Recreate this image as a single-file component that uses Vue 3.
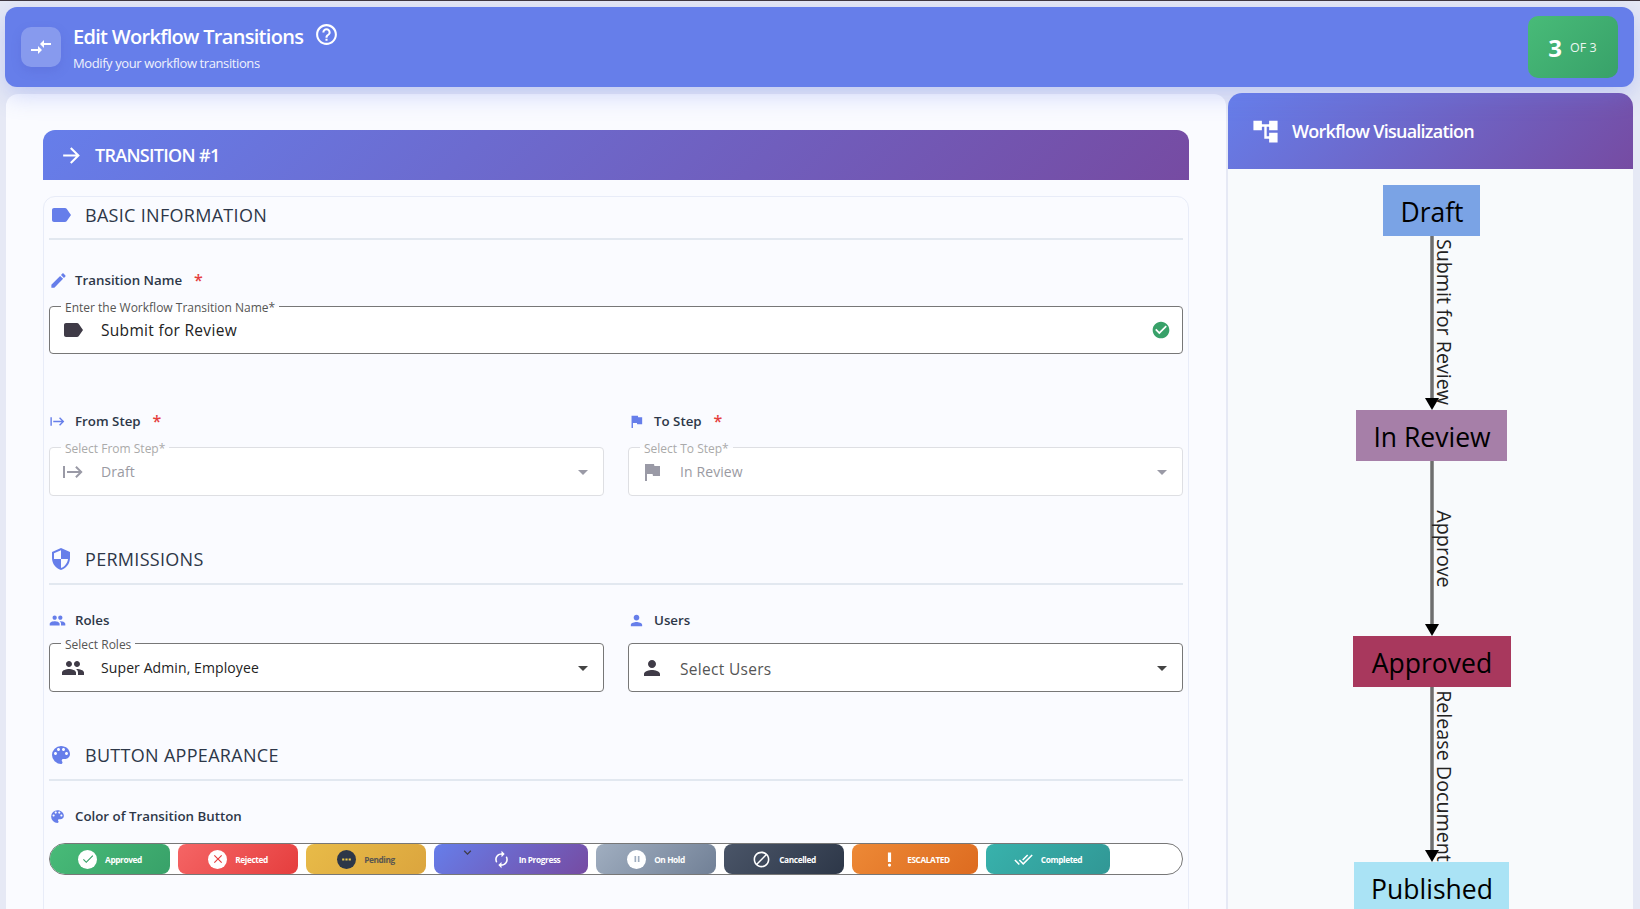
<template>
  <div class="page">
    <header class="top-bar">
      <div class="top-icon">
        <svg viewBox="0 0 24 24"><path :d="icons.compare" /></svg>
      </div>
      <div class="top-text">
        <div class="top-title">
          <span>Edit Workflow Transitions</span>
          <svg class="help" viewBox="0 0 24 24"><path :d="icons.help" /></svg>
        </div>
        <div class="top-sub">Modify your workflow transitions</div>
      </div>
      <div class="step-badge">
        <span class="step-num">3</span>
        <span class="step-of">OF 3</span>
      </div>
    </header>

    <main class="content">
      <section class="form-panel">
        <div class="transition-head">
          <svg viewBox="0 0 24 24"><path :d="icons.arrow" /></svg>
          <span>TRANSITION #1</span>
        </div>

        <div class="form-card">
          <div class="section-title first">
            <svg viewBox="0 0 24 24"><path :d="icons.label" /></svg>
            <span>BASIC INFORMATION</span>
          </div>

          <div class="field-label name-label">
            <svg viewBox="0 0 24 24"><path :d="icons.edit" /></svg>
            <span>Transition Name</span>
            <i class="req">*</i>
          </div>
          <div class="outlined name-input">
            <span class="legend">Enter the Workflow Transition Name*</span>
            <svg class="lead" viewBox="0 0 24 24"><path :d="icons.label" /></svg>
            <span class="value big">Submit for Review</span>
            <svg class="ok" viewBox="0 0 24 24"><path :d="icons.checkCircle" /></svg>
          </div>

          <div class="two-col step-labels">
            <div class="field-label">
              <svg viewBox="0 0 24 24"><path :d="icons.start" /></svg>
              <span>From Step</span>
              <i class="req">*</i>
            </div>
            <div class="field-label">
              <svg viewBox="0 0 24 24"><path :d="icons.flag" /></svg>
              <span>To Step</span>
              <i class="req">*</i>
            </div>
          </div>
          <div class="two-col step-fields">
            <div class="outlined disabled">
              <span class="legend">Select From Step*</span>
              <svg class="lead" viewBox="0 0 24 24"><path :d="icons.start" /></svg>
              <span class="value">Draft</span>
              <svg class="drop" viewBox="0 0 24 24"><path :d="icons.drop" /></svg>
            </div>
            <div class="outlined disabled">
              <span class="legend">Select To Step*</span>
              <svg class="lead" viewBox="0 0 24 24"><path :d="icons.flag" /></svg>
              <span class="value">In Review</span>
              <svg class="drop" viewBox="0 0 24 24"><path :d="icons.drop" /></svg>
            </div>
          </div>

          <div class="section-title">
            <svg viewBox="0 0 24 24"><path :d="icons.shield" /></svg>
            <span>PERMISSIONS</span>
          </div>

          <div class="two-col perm-labels">
            <div class="field-label">
              <svg viewBox="0 0 24 24"><path :d="icons.people" /></svg>
              <span>Roles</span>
            </div>
            <div class="field-label">
              <svg viewBox="0 0 24 24"><path :d="icons.person" /></svg>
              <span>Users</span>
            </div>
          </div>
          <div class="two-col perm-fields">
            <div class="outlined">
              <span class="legend">Select Roles</span>
              <svg class="lead" viewBox="0 0 24 24"><path :d="icons.people" /></svg>
              <span class="value">Super Admin, Employee</span>
              <svg class="drop" viewBox="0 0 24 24"><path :d="icons.drop" /></svg>
            </div>
            <div class="outlined">
              <svg class="lead" viewBox="0 0 24 24"><path :d="icons.person" /></svg>
              <span class="value big muted">Select Users</span>
              <svg class="drop" viewBox="0 0 24 24"><path :d="icons.drop" /></svg>
            </div>
          </div>

          <div class="section-title">
            <svg viewBox="0 0 24 24"><path :d="icons.palette" /></svg>
            <span>BUTTON APPEARANCE</span>
          </div>

          <div class="field-label color-label">
            <svg viewBox="0 0 24 24"><path :d="icons.palette" /></svg>
            <span>Color of Transition Button</span>
          </div>
          <div class="toggle-group">
            <button v-for="b in buttons" :key="b.text" class="toggle" :class="b.cls">
              <svg v-if="b.cls === 'progress'" class="chevron" viewBox="0 0 24 24"><path :d="icons.chevron" /></svg>
              <span class="toggle-icon" :class="{ badge: b.badge }">
                <svg viewBox="0 0 24 24"><path :d="icons[b.icon]" /></svg>
              </span>
              <span>{{ b.text }}</span>
            </button>
          </div>
        </div>
      </section>

      <aside class="viz-panel">
        <div class="viz-head">
          <svg viewBox="0 0 24 24"><path :d="icons.tree" /></svg>
          <span>Workflow Visualization</span>
        </div>
        <svg class="diagram" width="405" height="740" viewBox="0 0 405 740">
          <g v-for="e in edges" :key="e.label">
            <line x1="204" :y1="e.y1" x2="204" :y2="e.y2 - 10" stroke="#6e6e6e" stroke-width="3.5" />
            <polygon :points="`197,${e.y2 - 12} 211,${e.y2 - 12} 204,${e.y2}`" fill="#000" />
            <text class="edge-text" text-anchor="middle" :transform="`translate(209 ${e.mid}) rotate(90)`">{{ e.label }}</text>
          </g>
          <g v-for="n in nodes" :key="n.label">
            <rect :x="n.x" :y="n.y" :width="n.w" :height="n.h" :fill="n.fill" />
            <text class="node-text" x="204" :y="n.y + 37" text-anchor="middle">{{ n.label }}</text>
          </g>
        </svg>
      </aside>
    </main>
  </div>
</template>

<script setup>
// Material icon paths used across the form
const icons = {
  compare: 'M9.01 14H2v2h7.01v3L13 15l-3.99-4v3zm5.98-1v-3H22V8h-7.01V5L11 9l3.99 4z',
  help: 'M11 18h2v-2h-2v2zm1-16C6.48 2 2 6.48 2 12s4.48 10 10 10 10-4.48 10-10S17.52 2 12 2zm0 18c-4.41 0-8-3.59-8-8s3.59-8 8-8 8 3.59 8 8-3.59 8-8 8zm0-14c-2.21 0-4 1.79-4 4h2c0-1.1.9-2 2-2s2 .9 2 2c0 2-3 1.75-3 5h2c0-2.25 3-2.5 3-5 0-2.21-1.79-4-4-4z',
  arrow: 'M12 4l-1.41 1.41L16.17 11H4v2h12.17l-5.58 5.59L12 20l8-8z',
  label: 'M17.63 5.84C17.27 5.33 16.67 5 16 5L5 5.01C3.9 5.01 3 5.9 3 7v10c0 1.1.9 1.99 2 1.99L16 19c.67 0 1.27-.33 1.63-.84L22 12l-4.37-6.16z',
  edit: 'M3 17.25V21h3.75L17.81 9.94l-3.75-3.75L3 17.25zM20.71 7.04c.39-.39.39-1.02 0-1.41l-2.34-2.34c-.39-.39-1.02-.39-1.41 0l-1.83 1.83 3.75 3.75 1.83-1.83z',
  checkCircle: 'M12 2C6.48 2 2 6.48 2 12s4.48 10 10 10 10-4.48 10-10S17.52 2 12 2zm-2 15l-5-5 1.41-1.41L10 14.17l7.59-7.59L19 8l-9 9z',
  start: 'M2 6v12h2V6H2zm13.6 0-1.4 1.4 3.6 3.6H6v2h11.8l-3.6 3.6 1.4 1.4 6-6z',
  flag: 'M14.4 6L14 4H5v17h2v-7h5.6l.4 2h7V6z',
  shield: 'M12 1L3 5v6c0 5.55 3.84 10.74 9 12 5.16-1.26 9-6.45 9-12V5l-9-4zm0 10.99h7c-.53 4.12-3.28 7.79-7 8.94V12H5V6.3l7-3.11v8.8z',
  people: 'M16 11c1.66 0 2.99-1.34 2.99-3S17.66 5 16 5c-1.66 0-3 1.34-3 3s1.34 3 3 3zm-8 0c1.66 0 2.99-1.34 2.99-3S9.66 5 8 5C6.34 5 5 6.34 5 8s1.34 3 3 3zm0 2c-2.33 0-7 1.17-7 3.5V19h14v-2.5c0-2.33-4.67-3.5-7-3.5zm8 0c-.29 0-.62.02-.97.05 1.16.84 1.97 1.97 1.97 3.45V19h6v-2.5c0-2.33-4.67-3.5-7-3.5z',
  person: 'M12 12c2.21 0 4-1.79 4-4s-1.79-4-4-4-4 1.79-4 4 1.79 4 4 4zm0 2c-2.67 0-8 1.34-8 4v2h16v-2c0-2.66-5.33-4-8-4z',
  palette: 'M12 3a9 9 0 0 0 0 18c.83 0 1.5-.67 1.5-1.5 0-.39-.15-.74-.39-1.01-.23-.26-.38-.61-.38-.99 0-.83.67-1.5 1.5-1.5H16c2.76 0 5-2.24 5-5 0-4.42-4.03-8-9-8zm-5.5 9c-.83 0-1.5-.67-1.5-1.5S5.67 9 6.5 9 8 9.67 8 10.5 7.33 12 6.5 12zm3-4C8.67 8 8 7.33 8 6.5S8.67 5 9.5 5s1.5.67 1.5 1.5S10.33 8 9.5 8zm5 0c-.83 0-1.5-.67-1.5-1.5S13.67 5 14.5 5s1.5.67 1.5 1.5S15.33 8 14.5 8zm3 4c-.83 0-1.5-.67-1.5-1.5S16.67 9 17.5 9s1.5.67 1.5 1.5-.67 1.5-1.5 1.5z',
  tree: 'M22 11V3h-7v3H9V3H2v8h7V8h2v10h4v3h7v-8h-7v3h-2V8h2v3z',
  drop: 'M7 10l5 5 5-5z',
  chevron: 'M16.59 8.59L12 13.17 7.41 8.59 6 10l6 6 6-6z',
  renew: 'M12 6v3l4-4-4-4v3c-4.42 0-8 3.58-8 8 0 1.57.46 3.03 1.24 4.26L6.7 14.8c-.45-.83-.7-1.79-.7-2.8 0-3.31 2.69-6 6-6zm6.76 1.74L17.3 9.2c.44.84.7 1.79.7 2.8 0 3.31-2.69 6-6 6v-3l-4 4 4 4v-3c4.42 0 8-3.58 8-8 0-1.57-.46-3.03-1.24-4.26z',
  check: 'M9 16.17L4.83 12l-1.42 1.41L9 19 21 7l-1.41-1.41z',
  close: 'M19 6.41L17.59 5 12 10.59 6.41 5 5 6.41 10.59 12 5 17.59 6.41 19 12 13.41 17.59 19 19 17.59 13.41 12z',
  more: 'M4 10h4v4H4zm6 0h4v4h-4zm6 0h4v4h-4z',
  pause: 'M6 19h4V5H6v14zm8-14v14h4V5h-4z',
  block: 'M12 2C6.48 2 2 6.48 2 12s4.48 10 10 10 10-4.48 10-10S17.52 2 12 2zM4 12c0-4.42 3.58-8 8-8 1.85 0 3.55.63 4.9 1.69L5.69 16.9C4.63 15.55 4 13.85 4 12zm8 8c-1.85 0-3.55-.63-4.9-1.69L18.31 7.1C19.37 8.45 20 10.15 20 12c0 4.42-3.58 8-8 8z',
  priority: 'M10 3h4v12h-4zM12 17a2 2 0 1 1 0 4 2 2 0 0 1 0-4z',
  doneAll: 'M18 7l-1.41-1.41-6.34 6.34 1.41 1.41L18 7zm4.24-1.41L11.66 16.17 7.48 12l-1.41 1.41L11.66 19l12-12-1.42-1.41zM.41 13.41L6 19l1.41-1.41L1.83 12 .41 13.41z'
}

const buttons = [
  { text: 'Approved', cls: 'approved', icon: 'check', badge: true },
  { text: 'Rejected', cls: 'rejected', icon: 'close', badge: true },
  { text: 'Pending', cls: 'pending', icon: 'more', badge: true },
  { text: 'In Progress', cls: 'progress', icon: 'renew' },
  { text: 'On Hold', cls: 'hold', icon: 'pause', badge: true },
  { text: 'Cancelled', cls: 'cancelled', icon: 'block' },
  { text: 'ESCALATED', cls: 'escalated', icon: 'priority' },
  { text: 'Completed', cls: 'completed', icon: 'doneAll' }
]

// Workflow graph, coordinates are inside the svg
const nodes = [
  { label: 'Draft', x: 155, y: 16, w: 97, h: 51, fill: '#7aa3e5' },
  { label: 'In Review', x: 128, y: 241, w: 151, h: 51, fill: '#a67fa8' },
  { label: 'Approved', x: 125, y: 467, w: 158, h: 51, fill: '#a8385d' },
  { label: 'Published', x: 126, y: 693, w: 155, h: 60, fill: '#aae3f5' }
]

const edges = [
  { label: 'Submit for Review', y1: 66, y2: 241, mid: 153 },
  { label: 'Approve', y1: 292, y2: 467, mid: 380 },
  { label: 'Release Document', y1: 518, y2: 693, mid: 607 }
]
</script>

<style>
html, body {
  margin: 0;
  background: #e6e9f5;
}
</style>

<style scoped>
.page {
  height: 909px;
  overflow: hidden;
  box-sizing: border-box;
  border-top: 1px solid #3e3640;
  padding: 6px 6px 0 5px;
  display: flex;
  flex-direction: column;
  background: #e6e9f5;
  font-family: "Open Sans", "Noto Sans", sans-serif;
  color: #2d3748;
}

.top-bar {
  flex: none;
  height: 80px;
  box-sizing: border-box;
  display: flex;
  align-items: center;
  padding: 0 16px 0 16px;
  border-radius: 12px;
  background: #667eea;
  color: #fff;
  box-shadow: 0 8px 24px rgba(102, 126, 234, 0.3);
  position: relative;
  z-index: 2;
}

.top-icon {
  width: 40px;
  height: 40px;
  border-radius: 10px;
  background: rgba(255, 255, 255, 0.22);
  display: flex;
  align-items: center;
  justify-content: center;
  box-shadow: 0 4px 10px rgba(80, 90, 200, 0.25);
}

.top-icon svg {
  width: 24px;
  height: 24px;
  fill: #fff;
}

.top-text {
  margin-left: 12px;
  flex: 1;
}

.top-title {
  display: flex;
  align-items: center;
  font-size: 20px;
  font-weight: 600;
  line-height: 28px;
  letter-spacing: -0.7px;
}

.help {
  width: 25px;
  height: 25px;
  margin: -4px 0 0 11px;
  fill: #fff;
}

.top-sub {
  font-size: 13px;
  line-height: 18px;
  margin-top: 3px;
  letter-spacing: -0.4px;
  opacity: 0.9;
}

.step-badge {
  width: 90px;
  height: 62px;
  border-radius: 10px;
  background: linear-gradient(135deg, #48bb78, #38a169);
  display: flex;
  align-items: center;
  justify-content: center;
  gap: 8px;
}

.step-num {
  font-size: 24px;
  font-weight: 700;
  margin-left: -1px;
}

.step-of {
  font-size: 12.5px;
  opacity: 0.9;
}

.content {
  flex: 1;
  min-height: 0;
  display: flex;
  gap: 2px;
  margin-top: 7px;
  margin-left: 1px;
}

.form-panel {
  width: 1220px;
  flex: none;
  box-sizing: border-box;
  padding: 36px 37px 0;
  background: #fafbff;
  border-radius: 12px 12px 0 0;
}

.transition-head {
  height: 50px;
  display: flex;
  align-items: center;
  padding-left: 16px;
  gap: 11px;
  border-radius: 12px 12px 0 0;
  background: linear-gradient(135deg, #667eea, #764ba2);
  color: #fff;
  font-size: 18px;
  font-weight: 600;
  letter-spacing: -0.7px;
}

.transition-head svg {
  width: 25px;
  height: 25px;
  fill: #fff;
}

.form-card {
  margin-top: 16px;
  box-sizing: border-box;
  height: 760px;
  padding: 0 5px;
  border: 1px solid #e8ecf8;
  border-radius: 12px;
}

.section-title {
  height: 43px;
  box-sizing: border-box;
  display: flex;
  align-items: center;
  gap: 12px;
  margin-top: 46px;
  padding-bottom: 7px;
  border-bottom: 2px solid #e2e8f0;
  font-size: 18px;
  font-weight: 500;
  letter-spacing: 0.3px;
  color: #2d3748;
}

.section-title.first {
  margin-top: 0;
  padding-bottom: 5px;
}

.section-title svg {
  width: 24px;
  height: 24px;
  fill: #667eea;
  flex: none;
}

.field-label {
  height: 20px;
  display: flex;
  align-items: center;
  gap: 9px;
  font-size: 13.3px;
  font-weight: 600;
  color: #2d3748;
}

.field-label svg {
  width: 17px;
  height: 17px;
  fill: #667eea;
  flex: none;
}

.name-label svg {
  width: 19px;
  height: 19px;
  margin-right: -2px;
}

.req {
  margin-left: 3px;
  margin-top: -1px;
  font-style: normal;
  font-size: 16px;
  color: #e53e3e;
}

.name-label {
  margin-top: 30px;
}

.two-col {
  display: grid;
  grid-template-columns: 1fr 1fr;
  gap: 24px;
}

.outlined {
  position: relative;
  box-sizing: border-box;
  display: flex;
  align-items: center;
  padding: 0 8px 0 14px;
  border: 1px solid #777;
  border-radius: 4px;
  background: #fff;
  height: 49px;
  font-size: 14px;
  color: #222;
}

.legend {
  position: absolute;
  top: -6px;
  left: 11px;
  padding: 0 4px;
  font-size: 12px;
  line-height: 14px;
  color: #555;
  background: linear-gradient(#fafbff 45%, #fff 45%);
}

.lead {
  width: 24px;
  height: 24px;
  margin-left: -3px;
  fill: #3f3b47;
  flex: none;
}

.value {
  margin-left: 16px;
  flex: 1;
  letter-spacing: 0.1px;
}

.value.big {
  font-size: 15.5px;
  letter-spacing: 0.3px;
}

.value.muted {
  color: #555;
  padding-top: 2px;
}

.ok {
  width: 20px;
  height: 20px;
  margin-right: 3px;
  fill: #38a169;
}

.drop {
  width: 24px;
  height: 24px;
  fill: #444;
}

.name-input {
  margin-top: 16px;
  height: 48px;
}

.step-labels {
  margin-top: 57px;
}

.step-fields {
  margin-top: 16px;
}

.step-fields .outlined {
  height: 49px;
  border-color: #dedfe3;
  color: #9a9aa2;
}

.disabled .legend {
  color: #aaa;
}

.disabled .lead,
.disabled .drop {
  fill: #9a9aa6;
}

.perm-labels {
  margin-top: 25px;
}

.perm-fields {
  margin-top: 13px;
}

.color-label {
  margin-top: 25px;
}

.toggle-group {
  margin-top: 17px;
  height: 32px;
  box-sizing: border-box;
  border: 1px solid #777;
  border-radius: 16px;
  background: #fff;
  overflow: hidden;
  display: flex;
  gap: 8px;
}

.toggle {
  position: relative;
  width: 120px;
  height: 30px;
  flex: none;
  padding: 0;
  border: none;
  border-radius: 8px;
  display: flex;
  align-items: center;
  justify-content: center;
  gap: 8px;
  font-family: inherit;
  font-size: 8.3px;
  font-weight: 700;
  letter-spacing: -0.4px;
  color: #fff;
}

.toggle-icon {
  width: 19px;
  height: 19px;
  display: flex;
  align-items: center;
  justify-content: center;
  flex: none;
}

.toggle-icon svg {
  width: 19px;
  height: 19px;
  fill: #fff;
}

.toggle-icon.badge {
  border-radius: 50%;
  background: #fff;
}

.toggle-icon.badge svg {
  width: 14px;
  height: 14px;
}

.chevron {
  position: absolute;
  top: 1px;
  left: 26px;
  width: 15px;
  height: 15px;
  fill: #3f3b47;
}

.approved {
  background: linear-gradient(135deg, #48bb78, #38a169);
}

.approved .badge svg {
  fill: #38a169;
}

.rejected {
  background: linear-gradient(135deg, #f56565, #e53e3e);
}

.rejected .badge svg {
  fill: #e53e3e;
}

.pending {
  width: 120px;
  background: linear-gradient(135deg, #e8bb48, #dba53e);
  color: #5a5650;
}

.pending .badge {
  background: #2d3748;
}

.pending .badge svg {
  fill: #ecc94b;
  width: 13px;
  height: 13px;
}

.progress {
  width: 154px;
  padding-left: 30px;
  box-sizing: border-box;
  background: linear-gradient(135deg, #667eea, #764ba2);
}

.hold {
  background: linear-gradient(135deg, #a0aec0, #718096);
}

.hold .badge svg {
  fill: #a0aec0;
  width: 10px;
  height: 10px;
}

.cancelled {
  background: linear-gradient(135deg, #4a5568, #2d3748);
}

.escalated {
  width: 126px;
  background: linear-gradient(135deg, #ed8936, #dd6b20);
}

.completed {
  width: 124px;
  background: linear-gradient(135deg, #38b2ac, #319795);
}

.viz-panel {
  width: 405px;
  flex: none;
  margin-top: -1px;
  background: #f8fafc;
  border-radius: 14px 14px 0 0;
  overflow: hidden;
}

.viz-head {
  height: 76px;
  display: flex;
  align-items: center;
  gap: 12px;
  padding-left: 23px;
  background: linear-gradient(135deg, #667eea, #764ba2);
  color: #fff;
  font-size: 18px;
  font-weight: 600;
  letter-spacing: -0.75px;
}

.viz-head svg {
  width: 29px;
  height: 29px;
  fill: #fff;
}

.diagram {
  display: block;
}

.node-text {
  font-size: 26.5px;
  fill: #000;
}

.edge-text {
  font-size: 19.7px;
  fill: #222;
}
</style>
